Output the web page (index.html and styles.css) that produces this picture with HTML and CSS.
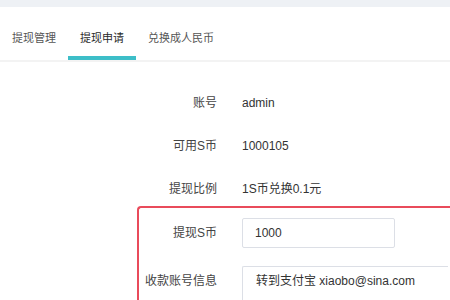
FILE: index.html
```html
<!DOCTYPE html>
<html lang="zh-CN">
<head>
<meta charset="utf-8">
<title>提现申请</title>
<link rel="stylesheet" href="styles.css">
</head>
<body>
<div class="topbar"></div>
<nav class="tabs">
  <div class="tab">提现管理</div>
  <div class="tab active">提现申请</div>
  <div class="tab">兑换成人民币</div>
</nav>
<main class="form">
  <div class="info">
    <div class="row"><span class="label">账号</span><span class="value">admin</span></div>
    <div class="row"><span class="label">可用S币</span><span class="value">1000105</span></div>
    <div class="row"><span class="label">提现比例</span><span class="value">1S币兑换0.1元</span></div>
  </div>
  <section class="box">
    <div class="field">
      <span class="label">提现S币</span>
      <div class="input">1000</div>
    </div>
    <div class="field top">
      <span class="label">收款账号信息</span>
      <div class="textarea">转到支付宝 xiaobo@sina.com</div>
    </div>
  </section>
</main>
</body>
</html>
```
FILE: styles.css
```css
html, body {
  margin: 0;
  padding: 0;
  background: #ffffff;
  overflow: hidden;
  width: 450px;
  height: 300px;
}
body {
  font-family: "Liberation Sans", "Noto Sans CJK SC", sans-serif;
  font-size: 12px;
  color: #333333;
}
.topbar {
  height: 7px;
  background: #eef1f5;
}
.tabs {
  display: flex;
  border-bottom: 2px solid #f3f3f3;
}
.tab {
  padding: 23px 12px 10px;
  line-height: 16px;
  font-size: 11px;
  color: #555555;
  border-bottom: 4px solid transparent;
}
.tab.active {
  color: #2a2a2a;
  border-bottom-color: #3dbec8;
}
.form {
  padding-top: 33px;
  margin-left: 137px;
}
.info {
  display: flex;
  flex-direction: column;
  gap: 27px;
  padding-left: 2px;
}
.row, .field {
  display: flex;
  align-items: center;
  gap: 25px;
  line-height: 16px;
}
.label {
  width: 78px;
  flex: none;
  text-align: right;
  color: #444444;
}
.value {
  color: #333333;
}
.box {
  margin-top: 9px;
  width: 313px;
  height: 95px;
  box-sizing: border-box;
  border: 2px solid #e94b5b;
  border-right: none;
  border-bottom: none;
  border-radius: 4px 0 0 0;
  padding-top: 10px;
  display: flex;
  flex-direction: column;
  gap: 18px;
}
.field.top {
  align-items: flex-start;
}
.field.top .label {
  padding-top: 7px;
}
.input {
  width: 153px;
  height: 30px;
  box-sizing: border-box;
  border: 1px solid #dcdfe6;
  border-radius: 2px;
  padding: 0 12px;
  line-height: 28px;
  color: #333333;
}
.textarea {
  width: 206px;
  height: 35px;
  box-sizing: border-box;
  border: 1px solid #dcdfe6;
  border-right: none;
  border-bottom: none;
  border-radius: 2px 0 0 0;
  padding: 6px 0 0 13px;
  line-height: 16px;
  white-space: nowrap;
  color: #333333;
}
```
